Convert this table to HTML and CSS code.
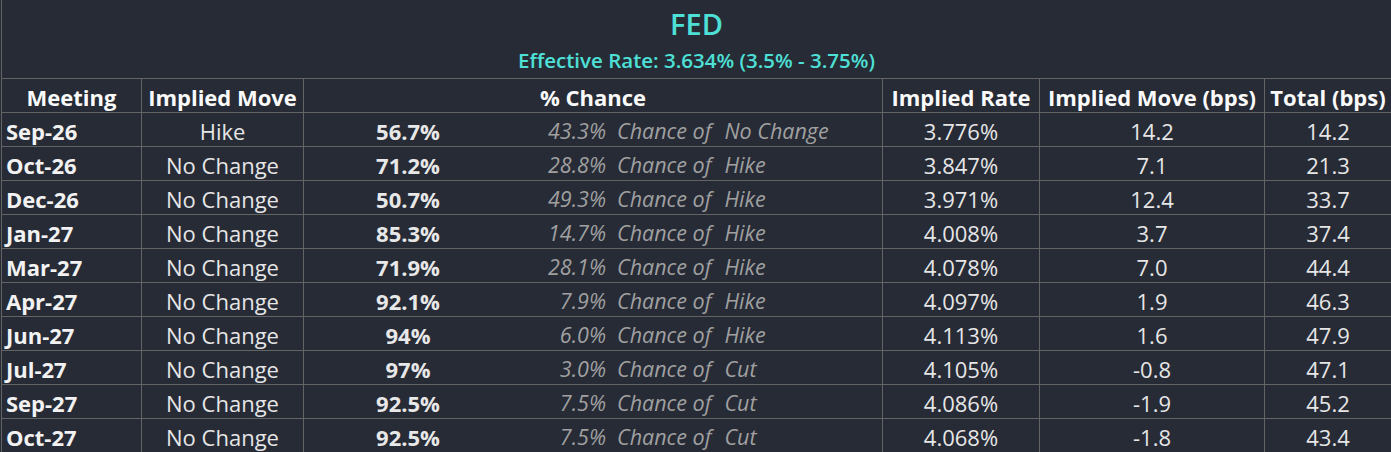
FILE: index.html
```html
<!DOCTYPE html>
<html>
<head>
<meta charset="utf-8">
<link rel="stylesheet" href="styles.css">
</head>
<body>
<div class="sheet">
  <div class="title-block">
    <div class="title">FED</div>
    <div class="subtitle">Effective Rate: 3.634% (3.5% - 3.75%)</div>
  </div>
  <div class="grid">
    <div class="cell head">Meeting</div>
    <div class="cell head">Implied Move</div>
    <div class="cell head">% Chance</div>
    <div class="cell head">Implied Rate</div>
    <div class="cell head">Implied Move (bps)</div>
    <div class="cell head">Total (bps)</div>

    <div class="cell date">Sep-26</div><div class="cell">Hike</div>
    <div class="cell chance"><span class="pct">56.7%</span><span class="opct">43.3%</span><span class="of">Chance of</span><span class="alt">No Change</span></div>
    <div class="cell">3.776%</div><div class="cell">14.2</div><div class="cell">14.2</div>

    <div class="cell date">Oct-26</div><div class="cell">No Change</div>
    <div class="cell chance"><span class="pct">71.2%</span><span class="opct">28.8%</span><span class="of">Chance of</span><span class="alt">Hike</span></div>
    <div class="cell">3.847%</div><div class="cell">7.1</div><div class="cell">21.3</div>

    <div class="cell date">Dec-26</div><div class="cell">No Change</div>
    <div class="cell chance"><span class="pct">50.7%</span><span class="opct">49.3%</span><span class="of">Chance of</span><span class="alt">Hike</span></div>
    <div class="cell">3.971%</div><div class="cell">12.4</div><div class="cell">33.7</div>

    <div class="cell date">Jan-27</div><div class="cell">No Change</div>
    <div class="cell chance"><span class="pct">85.3%</span><span class="opct">14.7%</span><span class="of">Chance of</span><span class="alt">Hike</span></div>
    <div class="cell">4.008%</div><div class="cell">3.7</div><div class="cell">37.4</div>

    <div class="cell date">Mar-27</div><div class="cell">No Change</div>
    <div class="cell chance"><span class="pct">71.9%</span><span class="opct">28.1%</span><span class="of">Chance of</span><span class="alt">Hike</span></div>
    <div class="cell">4.078%</div><div class="cell">7.0</div><div class="cell">44.4</div>

    <div class="cell date">Apr-27</div><div class="cell">No Change</div>
    <div class="cell chance"><span class="pct">92.1%</span><span class="opct">7.9%</span><span class="of">Chance of</span><span class="alt">Hike</span></div>
    <div class="cell">4.097%</div><div class="cell">1.9</div><div class="cell">46.3</div>

    <div class="cell date">Jun-27</div><div class="cell">No Change</div>
    <div class="cell chance"><span class="pct">94%</span><span class="opct">6.0%</span><span class="of">Chance of</span><span class="alt">Hike</span></div>
    <div class="cell">4.113%</div><div class="cell">1.6</div><div class="cell">47.9</div>

    <div class="cell date">Jul-27</div><div class="cell">No Change</div>
    <div class="cell chance"><span class="pct">97%</span><span class="opct">3.0%</span><span class="of">Chance of</span><span class="alt">Cut</span></div>
    <div class="cell">4.105%</div><div class="cell">-0.8</div><div class="cell">47.1</div>

    <div class="cell date">Sep-27</div><div class="cell">No Change</div>
    <div class="cell chance"><span class="pct">92.5%</span><span class="opct">7.5%</span><span class="of">Chance of</span><span class="alt">Cut</span></div>
    <div class="cell">4.086%</div><div class="cell">-1.9</div><div class="cell">45.2</div>

    <div class="cell date">Oct-27</div><div class="cell">No Change</div>
    <div class="cell chance"><span class="pct">92.5%</span><span class="opct">7.5%</span><span class="of">Chance of</span><span class="alt">Cut</span></div>
    <div class="cell">4.068%</div><div class="cell">-1.8</div><div class="cell">43.4</div>
  </div>
</div>
</body>
</html>
```

FILE: styles.css
```css
html, body {
  margin: 0;
  padding: 0;
  background: #262b36;
}
body {
  width: 1391px;
  height: 452px;
  overflow: hidden;
  font-family: "Open Sans", "Noto Sans", sans-serif;
  color: #e6e6e6;
}
.sheet {
  padding-left: 1px;
}
.title-block {
  height: 78px;
  box-sizing: border-box;
  border-left: 1px solid #646464;
  display: flex;
  flex-direction: column;
  align-items: center;
}
.title {
  color: #4ee0d6;
  font-size: 29px;
  font-weight: 600;
  line-height: 32px;
  margin-top: 8px;
}
.subtitle {
  color: #4ee0d6;
  font-size: 20.5px;
  font-weight: 600;
  line-height: 26px;
  margin-top: 7px;
}
.grid {
  display: grid;
  grid-template-columns: 140px 162px 579px 157px 225px 127px;
  grid-auto-rows: 34px;
}
.cell {
  box-sizing: border-box;
  border-left: 1px solid #646464;
  border-top: 1px solid #646464;
  display: flex;
  align-items: center;
  justify-content: center;
  font-size: 22px;
  padding-top: 2px;
  white-space: nowrap;
  color: #e6e6e6;
}
.head {
  font-weight: 700;
  color: #fafafa;
}
.date {
  justify-content: flex-start;
  padding-left: 4px;
  font-weight: 700;
  color: #f2f2f2;
}
.chance {
  justify-content: flex-start;
}
.pct {
  width: 208px;
  text-align: center;
  font-weight: 700;
  color: #e8e8e8;
}
.opct, .of, .alt {
  font-style: italic;
  font-size: 21.5px;
  color: #a0a0a0;
}
.opct {
  width: 94px;
  text-align: right;
}
.of {
  margin-left: 11px;
}
.alt {
  margin-left: 13px;
}
```
